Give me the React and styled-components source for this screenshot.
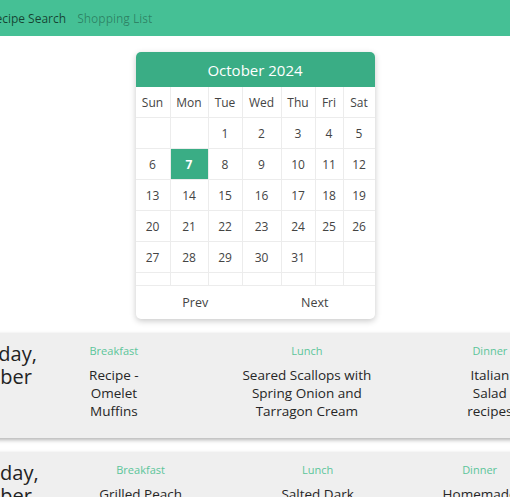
import React from "react";
import styled, { createGlobalStyle } from "styled-components";

const Global = createGlobalStyle`
  html, body { margin: 0; padding: 0; background: #fff; overflow: hidden; }
  body { font-family: "Open Sans", "Noto Sans", sans-serif; color: #333; }
  * { box-sizing: border-box; }
`;

const Page = styled.div`
  width: 510px;
  overflow: hidden;
`;

const NavBar = styled.nav`
  height: 36px;
  background: #45c095;
  display: flex;
  align-items: center;
  gap: 11px;
  margin-bottom: 16px;
`;

const NavLink = styled.a`
  font-size: 12px;
  color: ${(p) => (p.$active ? "rgba(0,0,0,0.68)" : "rgba(0,0,0,0.32)")};
  text-decoration: none;
  white-space: nowrap;
  &:first-child { margin-left: -12px; }
`;

const Calendar = styled.div`
  width: 239px;
  margin: 0 auto 14px;
  border-radius: 5px;
  background: #fff;
  box-shadow: 0 2px 6px rgba(0, 0, 0, 0.22);
  overflow: hidden;
`;

const CalHeader = styled.div`
  height: 35px;
  background: #3aad85;
  color: #fff;
  display: flex;
  align-items: center;
  justify-content: center;
  font-size: 15px;
`;

const Grid = styled.div`
  display: grid;
  grid-template-columns: 35px 38px 34px 39px 34px 28px 31px;
`;

const Cell = styled.div`
  height: ${(p) => (p.$short ? "13px" : "31px")};
  display: flex;
  align-items: center;
  justify-content: center;
  font-size: 12px;
  color: ${(p) => (p.$sel ? "#fff" : "#444")};
  font-weight: ${(p) => (p.$sel ? 700 : 400)};
  background: ${(p) => (p.$sel ? "#3aad85" : "transparent")};
  border-right: ${(p) => (p.$last ? "none" : "1px solid #ececec")};
  border-bottom: 1px solid #ececec;
`;

const Footer = styled.div`
  display: grid;
  grid-template-columns: 1fr 1fr;
  height: 33px;
`;

const FootBtn = styled.button`
  border: none;
  background: transparent;
  font-family: inherit;
  font-size: 12.5px;
  color: #444;
  cursor: pointer;
`;

const DayCard = styled.section`
  width: 660px;
  margin: 0 0 14px -60px;
  background: #efefef;
  box-shadow: 0 2px 4px rgba(0, 0, 0, 0.3);
  display: flex;
  padding: 9px 16px 18px;
`;

const DayTitle = styled.h2`
  flex: 0 0 80px;
  margin: 0;
  font-size: 20px;
  line-height: 23px;
  font-weight: 500;
  color: #222;
`;

const Meals = styled.div`
  display: flex;
  gap: 20px;
`;

const Meal = styled.div`
  width: ${(p) => p.$w}px;
  flex: 0 0 auto;
  display: flex;
  flex-direction: column;
  align-items: center;
  text-align: center;
`;

const MealLabel = styled.div`
  font-size: 11px;
  line-height: 18px;
  color: #5cc59a;
`;

const MealName = styled.div`
  margin-top: 6px;
  font-size: 13.5px;
  line-height: 18px;
  color: #262626;
  max-width: ${(p) => p.$w}px;
`;

const days = ["Sun", "Mon", "Tue", "Wed", "Thu", "Fri", "Sat"];
const cells = [
  null, null, 1, 2, 3, 4, 5,
  6, 7, 8, 9, 10, 11, 12,
  13, 14, 15, 16, 17, 18, 19,
  20, 21, 22, 23, 24, 25, 26,
  27, 28, 29, 30, 31, null, null,
];

const plan = [
  {
    day: "Monday, October 7",
    meals: [
      ["Breakfast", "Recipe - Omelet Muffins", 154, 85],
      ["Lunch", "Seared Scallops with Spring Onion and Tarragon Cream", 192, 160],
      ["Dinner", "Italian Salad recipes", 134, 75],
    ],
  },
  {
    day: "Tuesday, October 8",
    meals: [
      ["Breakfast", "Grilled Peach Salad with Burrata", 204, 100],
      ["Lunch", "Salted Dark Chocolate Tart", 110, 90],
      ["Dinner", "Homemade Pizza Dough", 174, 80],
    ],
  },
];

export default function App() {
  return (
    <Page>
      <Global />
      <NavBar>
        <NavLink $active>Recipe Search</NavLink>
        <NavLink>Shopping List</NavLink>
      </NavBar>
      <Calendar>
        <CalHeader>October 2024</CalHeader>
        <Grid>
          {days.map((d, i) => (
            <Cell key={d} $last={i === 6}>{d}</Cell>
          ))}
          {cells.map((c, i) => (
            <Cell key={i} $last={i % 7 === 6} $sel={c === 7}>{c}</Cell>
          ))}
          {days.map((d, i) => (
            <Cell key={"e" + i} $short $last={i === 6} />
          ))}
        </Grid>
        <Footer>
          <FootBtn>Prev</FootBtn>
          <FootBtn>Next</FootBtn>
        </Footer>
      </Calendar>
      {plan.map((p) => (
        <DayCard key={p.day}>
          <DayTitle>{p.day}</DayTitle>
          <Meals>
            {p.meals.map(([label, name, cw, tw]) => (
              <Meal key={label} $w={cw}>
                <MealLabel>{label}</MealLabel>
                <MealName $w={tw}>{name}</MealName>
              </Meal>
            ))}
          </Meals>
        </DayCard>
      ))}
    </Page>
  );
}
